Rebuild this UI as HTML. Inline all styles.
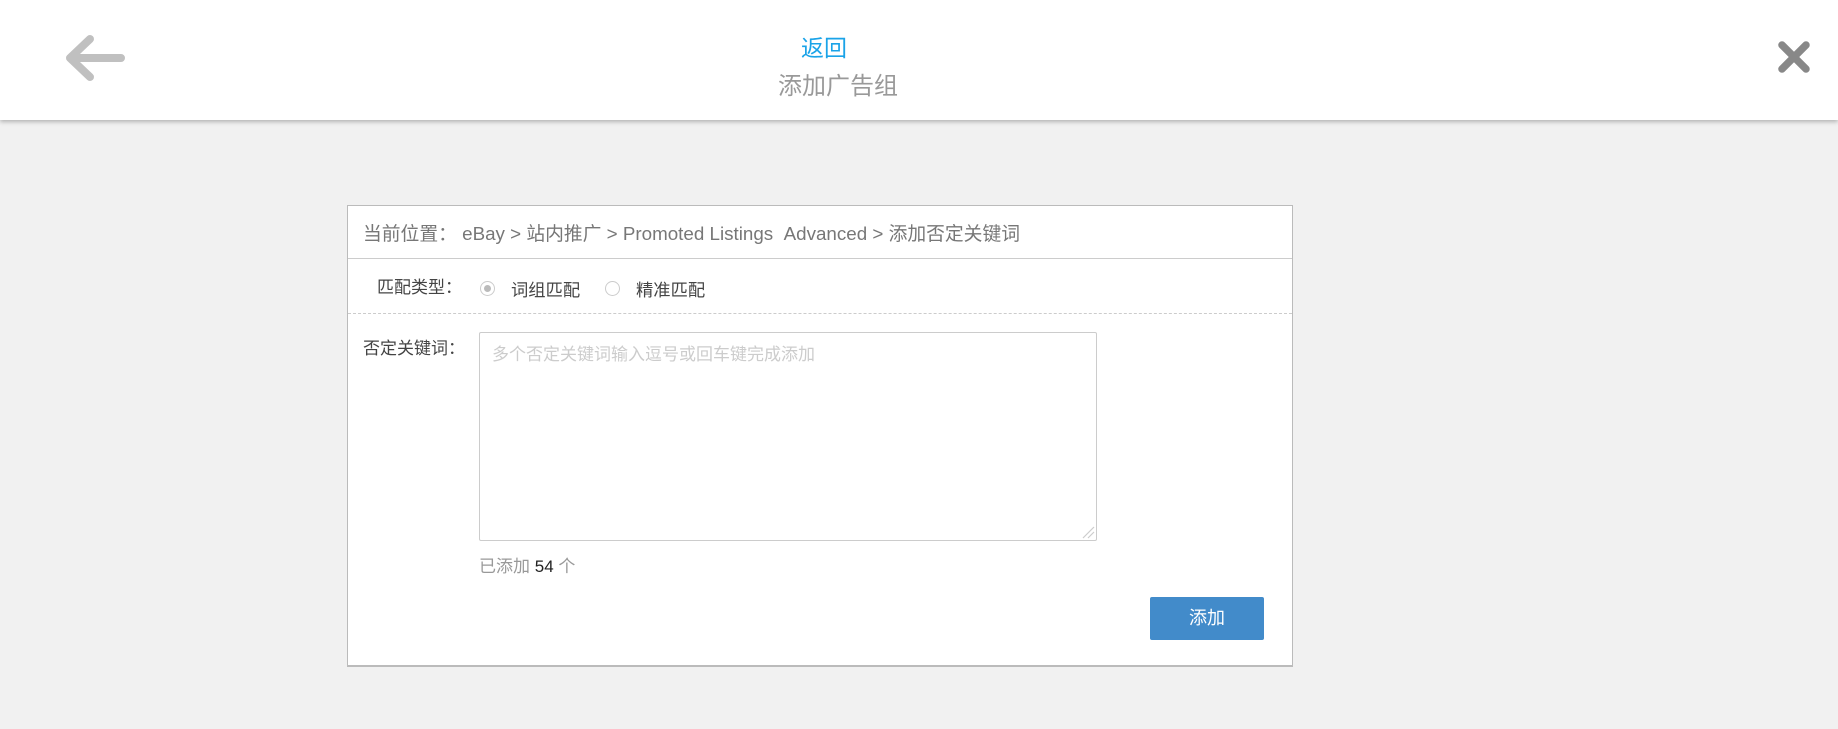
<!DOCTYPE html>
<html><head><meta charset="utf-8"><style>
*{margin:0;padding:0;box-sizing:border-box}
body{width:1838px;height:729px;background:#f1f1f1;font-family:"Liberation Sans","Noto Sans CJK SC",sans-serif;position:relative;overflow:hidden}
.hdr{position:absolute;left:0;top:0;width:1838px;height:120px;background:#fff;box-shadow:0 2px 4px rgba(0,0,0,.25)}
.t1{position:absolute;left:0;width:1648px;text-align:center;top:29px;font-size:23px;color:#1aa3e8}
.t2{position:absolute;left:0;width:1676px;text-align:center;top:66px;font-size:24px;color:#999}
.card{position:absolute;left:347px;top:205px;width:946px;height:462px;background:#fff;border:1px solid #bbb;border-bottom:2px solid #bbb}
.abs{position:absolute;white-space:nowrap}
</style></head><body>
<div class="hdr">
<svg class="abs" style="left:60px;top:30px" width="70" height="56"><path d="M30 9 L10 28 L30 47 M10 28 H61" stroke="#c0c0c0" stroke-width="8" fill="none" stroke-linecap="round" stroke-linejoin="round"/></svg>
<div class="t1">返回</div>
<div class="t2">添加广告组</div>
<svg class="abs" style="left:1772px;top:36px" width="44" height="42"><path d="M10 9 L34 33 M34 9 L10 33" stroke="#888" stroke-width="7.5" stroke-linecap="round"/></svg>
</div>
<div class="card">
<div class="abs" style="left:15px;top:13px;font-size:18.8px;color:#777">当前位置：&nbsp;eBay &gt; 站内推广 &gt; Promoted Listings &nbsp;Advanced &gt; 添加否定关键词</div>
<div class="abs" style="left:0;top:52px;width:944px;border-top:1px solid #ccc"></div>
<div class="abs" style="left:29px;top:67px;font-size:17px;color:#444">匹配类型：</div>
<div class="abs" style="left:132px;top:75px;width:15px;height:15px;border:1px solid #ccc;border-radius:50%"><div style="width:7px;height:7px;background:#bbb;border-radius:50%;margin:3px"></div></div>
<div class="abs" style="left:163px;top:70px;font-size:17.3px;color:#444">词组匹配</div>
<div class="abs" style="left:257px;top:75px;width:15px;height:15px;border:1px solid #ccc;border-radius:50%"></div>
<div class="abs" style="left:288px;top:70px;font-size:17.3px;color:#444">精准匹配</div>
<div class="abs" style="left:0;top:107px;width:944px;border-top:1px dashed #ccc"></div>
<div class="abs" style="left:15px;top:128px;font-size:17px;color:#444">否定关键词：</div>
<div class="abs" style="left:131px;top:126px;width:618px;height:209px;border:1px solid #ccc;border-radius:2px">
<div class="abs" style="left:12px;top:7px;font-size:17px;color:#ccc">多个否定关键词输入逗号或回车键完成添加</div>
<svg class="abs" style="right:1px;bottom:1px" width="16" height="16"><path d="M4 15 L15 4 M9 15 L15 9" stroke="#ccc" stroke-width="1.2"/></svg>
</div>
<div class="abs" style="left:131px;top:346px;font-size:17px;color:#999">已添加 <span style="color:#222">54</span> 个</div>
<div class="abs" style="left:802px;top:391px;width:114px;height:43px;background:#428bca;border-radius:2px;color:#fff;font-size:18px;text-align:center;line-height:43px">添加</div>
</div>
</body></html>
